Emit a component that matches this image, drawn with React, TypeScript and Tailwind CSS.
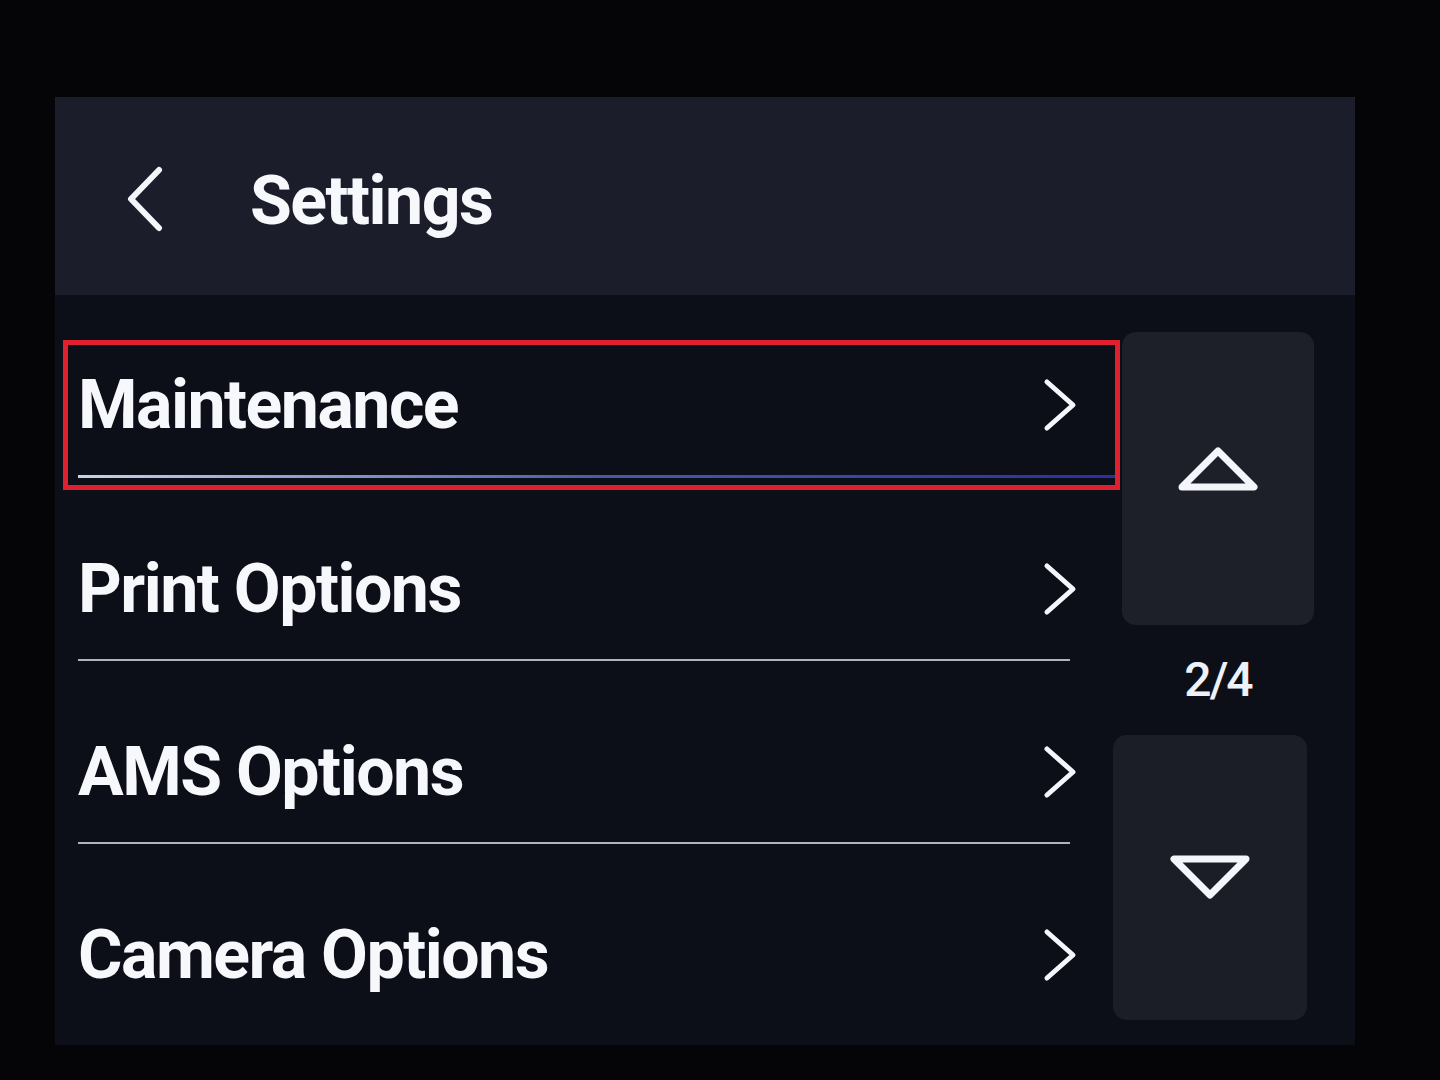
const rows = ['Maintenance', 'Print Options', 'AMS Options', 'Camera Options']

const font = { fontFamily: 'Roboto, "Open Sans", sans-serif' }

function Chevron({ className }: { className?: string }) {
  return (
    <svg viewBox="0 0 36 54" className={className} fill="none" stroke="#f4f6fb" strokeWidth="5" strokeLinecap="round" strokeLinejoin="round">
      <path d="M5 4 L31 27 L5 50" />
    </svg>
  )
}

function App() {
  return (
    <div className="h-[1080px] w-[1440px] overflow-hidden bg-[#050507] pl-[55px] pt-[97px]" style={font}>
      <div className="flex h-[948px] w-[1300px] flex-col bg-[#0d0f18]">
        <header className="flex h-[198px] items-center bg-[#1b1e2a] pl-[70px]">
          <svg viewBox="0 0 40 66" className="mt-[6px] h-[66px] w-[40px]" fill="none" stroke="#f4f6fb" strokeWidth="6" strokeLinecap="round" strokeLinejoin="round">
            <path d="M34 4 L6 33 L34 62" />
          </svg>
          <h1 className="ml-[85px] mt-[10px] text-[68px] font-bold tracking-[-1.5px] text-[#f7f8fc]">Settings</h1>
        </header>
        <div className="flex flex-1">
          <ul className="w-[1063px] pl-[23px]">
            {rows.map((r, i) => (
              <li key={r} className="relative flex h-[183px] flex-col">
                {i === 0 && (
                  <div className="absolute left-[-15px] top-[45px] h-[150px] w-[1057px] border-[5px] border-[#e0202e]" />
                )}
                <div className="flex h-[181px] items-center justify-between pr-[40px] pt-[40px]">
                  <span className="text-[68px] font-bold tracking-[-1.5px] text-[#f7f8fc]">{r}</span>
                  <Chevron className="h-[54px] w-[36px]" />
                </div>
                {i === 0 ? (
                  <div className="h-[3px] w-[1037px] bg-gradient-to-r from-[#c8d4e8] via-[#4a5aa8] to-[#2a2fa0]" />
                ) : i < 3 ? (
                  <div className="h-[2px] w-[992px] bg-[#aeb4c2]" />
                ) : null}
              </li>
            ))}
          </ul>
          <aside className="flex w-[200px] flex-col items-center pt-[37px]">
            <button className="flex h-[293px] w-[192px] items-center justify-center rounded-[14px] bg-[#1e2029]">
              <svg viewBox="0 0 84 48" className="mt-[-20px] h-[48px] w-[84px]" fill="none" stroke="#f4f6fb" strokeWidth="7" strokeLinejoin="round">
                <path d="M42 6 L78 42 L6 42 Z" />
              </svg>
            </button>
            <div className="flex h-[110px] items-center text-[48px] font-medium tracking-[-2px] text-[#eef1f8]">2/4</div>
            <button className="ml-[-16px] flex h-[285px] w-[194px] items-center justify-center rounded-[14px] bg-[#1c1e27]">
              <svg viewBox="0 0 84 48" className="mt-[-2px] h-[48px] w-[84px]" fill="none" stroke="#f4f6fb" strokeWidth="7" strokeLinejoin="round">
                <path d="M6 6 L78 6 L42 42 Z" />
              </svg>
            </button>
          </aside>
        </div>
      </div>
    </div>
  )
}

export default App
